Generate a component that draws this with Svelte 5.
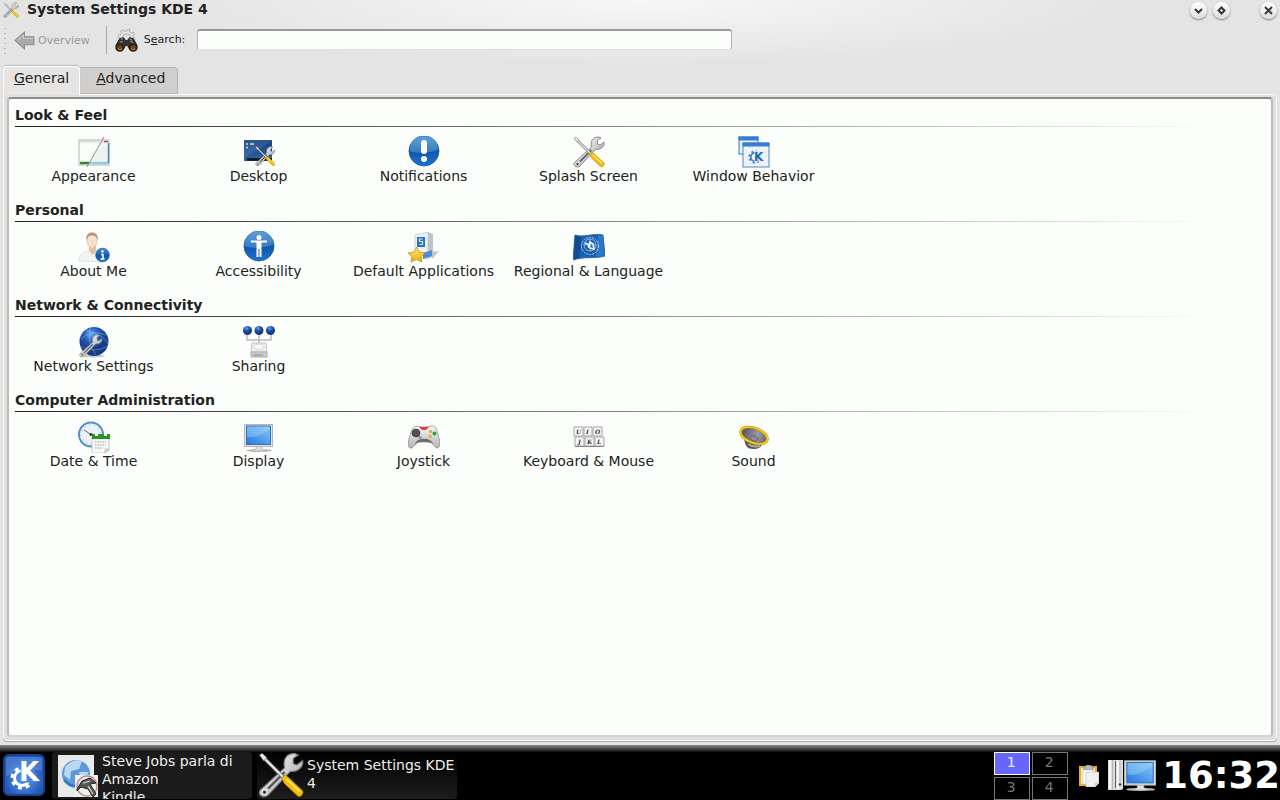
<script>
  let search = $state('');
  let activeTab = $state('General');
  let desktop = $state(1);

  const groups = [
    {
      title: 'Look & Feel',
      items: [
        { icon: 'appearance', label: 'Appearance' },
        { icon: 'desktop', label: 'Desktop' },
        { icon: 'notifications', label: 'Notifications' },
        { icon: 'tools', label: 'Splash Screen' },
        { icon: 'windows', label: 'Window Behavior' }
      ]
    },
    {
      title: 'Personal',
      items: [
        { icon: 'about', label: 'About Me' },
        { icon: 'accessibility', label: 'Accessibility' },
        { icon: 'defaults', label: 'Default Applications' },
        { icon: 'flag', label: 'Regional & Language' }
      ]
    },
    {
      title: 'Network & Connectivity',
      items: [
        { icon: 'network', label: 'Network Settings' },
        { icon: 'sharing', label: 'Sharing' }
      ]
    },
    {
      title: 'Computer Administration',
      items: [
        { icon: 'clock', label: 'Date & Time' },
        { icon: 'display', label: 'Display' },
        { icon: 'joystick', label: 'Joystick' },
        { icon: 'keyboard', label: 'Keyboard & Mouse' },
        { icon: 'sound', label: 'Sound' }
      ]
    }
  ];
</script>

{#snippet wrench()}
  <path d="M2 26 L18.500 11 C17 5 20 1 25.500 1 L28 2 L24.500 4.500 L24.500 8 L27 9 L31 6 C32 11 27 14 22.500 13.500 L7 30 C3 33 -1 29 2 26Z" fill="url(#metal)" stroke="#777" stroke-width=".8" />
  <path d="M7 25.500 L18.500 14" stroke="#555" stroke-width="1.600" />
  <circle cx="4.500" cy="28" r="1.500" fill="#333" stroke="#eee" stroke-width=".7" />
{/snippet}

{#snippet tools()}
  {@render wrench()}
  <path d="M3 3 L18 18" stroke="#777" stroke-width="2.600" />
  <path d="M3 3 L18 18" stroke="#eee" stroke-width="1.300" />
  <path d="M1 2 L3 1 L6 4 L4 6Z" fill="#eee" stroke="#888" stroke-width=".6" />
  <path d="M16.500 18 L19 16 L22 18.500 L31 27 C32 29 29.500 32 27.500 30.500 L18.500 22Z" fill="#f5bd08" stroke="#b98a00" stroke-width=".6" />
  <path d="M20 19 L29 27.500" stroke="#ffe670" stroke-width="1.200" />
{/snippet}

{#snippet gear()}
  <circle r="6" fill="none" stroke-width="2.400" />
  <circle r="8" fill="none" stroke-width="2.600" stroke-dasharray="3.140 3.140" />
{/snippet}

{#snippet icon(name)}
  <svg class="icon" viewBox="0 0 32 32" aria-hidden="true">
    {#if name === 'appearance'}
      <rect x="1" y="4" width="30" height="25" fill="#fafcfa" stroke="#b5b5b5" />
      <path d="M1.500 5.500H22" stroke="#ccc" stroke-width="2" stroke-dasharray="2 1" />
      <path d="M24 4H30.500V7H22Z" fill="#dbe9f4" />
      <path d="M26 5.500h4" stroke="#d33" stroke-width="1.500" />
      <path d="M2 27h9" stroke="#2f8a2f" stroke-width="2.500" />
      <path d="M12 27h18" stroke="#8ccbe8" stroke-width="2.500" />
      <path d="M30.500 7v20" stroke="#3b82c8" stroke-width="1.500" />
      <path d="M24 9 L29 9 L29 25 L14 25Z" fill="#eff0f0" />
      <path d="M26 1 L9 31" stroke="#888" />
    {:else if name === 'desktop'}
      <rect x="1" y="4" width="28" height="21" fill="url(#screen)" />
      <path d="M1 22 L29 5 V4 H1Z" fill="#6796cc" opacity=".25" />
      <path d="M4 23.500h25" stroke="#07131f" stroke-width="2.500" />
      <path d="M3 8h2M3 11.500h2M7 8h4" stroke="#d5e2b1" stroke-width="1.500" />
      <g transform="translate(12 10) scale(.64)">{@render tools()}</g>
    {:else if name === 'notifications'}
      <circle cx="16" cy="15" r="15" fill="url(#blue)" stroke="#165398" stroke-width=".8" />
      <path d="M2 13 A14 14 0 0 1 30 13 C25 17 7 18 2 15Z" fill="#83bee9" opacity=".35" />
      <rect x="13" y="4" width="6" height="14" rx="3" fill="#fff" />
      <circle cx="16" cy="23" r="3" fill="#fff" />
    {:else if name === 'tools'}
      {@render tools()}
    {:else if name === 'windows'}
      <rect x="1" y="1" width="19" height="17" fill="#e8f1fa" stroke="#347bc9" />
      <path d="M.5 2.500h20" stroke="#377dd0" stroke-width="4" />
      <rect x="5" y="7" width="26" height="24" fill="#eef1f5" stroke="#4b8ccf" />
      <path d="M4.500 8.500h27" stroke="#377dd0" stroke-width="4" />
      <g stroke="#3b7fc9" transform="translate(17 21) scale(.7)">{@render gear()}</g>
      <text x="16" y="25" fill="#2268b7" stroke="#eef1f5" stroke-width="1.500" paint-order="stroke" font-size="12" font-weight="bold">K</text>
    {:else if name === 'about'}
      <path d="M1 30 C1 24 4 21 11 20 H18 C24 22 25 26 25 31 Z" fill="#f2f4f7" stroke="#d8dae0" stroke-width=".8" />
      <path d="M11 14h7v6l-3.500 4-3.500-4Z" fill="#e2c1a2" />
      <ellipse cx="14" cy="9.500" rx="5" ry="7.500" fill="#f6e2cc" stroke="#cdb49b" stroke-width=".6" />
      <path d="M8.500 9 C6 0 21 -2 20 9 L18.500 6 C15 4 12 4 10 6Z" fill="#b5977a" />
      <circle cx="24.500" cy="24" r="6.800" fill="url(#blue)" stroke="#164d8c" stroke-width=".7" />
      <circle cx="24.500" cy="20.500" r="1.200" fill="#fff" />
      <path d="M23 23.500h2v4.500M22.500 28h4" stroke="#fff" stroke-width="1.600" fill="none" />
    {:else if name === 'accessibility'}
      <circle cx="16" cy="15" r="15" fill="url(#blue)" stroke="#165398" stroke-width=".8" />
      <path d="M2 13 A14 14 0 0 1 30 13 C25 17 7 18 2 15Z" fill="#83bee9" opacity=".35" />
      <circle cx="16" cy="6.500" r="2.500" fill="#fff" />
      <path d="M8 9.500h16v2h-5.500V26H16.500V18h-1v8h-2V11.500H8Z" fill="#fff" />
    {:else if name === 'defaults'}
      <path d="M22 21 L31 20 L24 28Z" fill="#aaa" opacity=".7" />
      <path d="M7 4 L20 1 V28 L7 26Z" fill="#edf1f6" stroke="#c3c8cc" stroke-width=".7" />
      <path d="M20 1 L25 3 V25 L20 28Z" fill="#bdc3c9" />
      <path d="M15 22 L24 19 V25 L15 28Z" fill="#4b8bd8" />
      <rect x="9" y="6" width="8" height="10" fill="#2874c2" />
      <path d="M14.500 8h-3v2.500h3v3h-3" fill="none" stroke="#dbe9f7" stroke-width="1.200" />
      <path d="M8.500 16 L11 21 L17 22 L13 25.500 L14 31 L8.500 28.500 L3 31 L4 25.500 L0 22 L6 21Z" fill="url(#gold)" stroke="#c49220" stroke-width=".8" />
    {:else if name === 'flag'}
      <path d="M2 4 C10 7 19 2 30 4 L32 25 C22 28 12 25 0 29Z" fill="#195eaf" stroke="#2669b3" />
      <path d="M2 5 L8 6 L6 27 L1 28Z" fill="#12498f" />
      <path d="M25 4 L30 5 L31 24 L23 26Z" fill="#2d76c5" />
      <g fill="none" stroke="#b8d7ef">
        <circle cx="17" cy="15" r="8.500" stroke-dasharray="2 1" />
        <circle cx="17" cy="14" r="6" stroke-width=".7" />
        <path d="M11 14h12M17 8v12" stroke-width=".7" />
      </g>
      <path d="M12 12l3 1 1 4 1-6 3 2 1 5-4-1" fill="none" stroke="#fff" stroke-width="1.500" />
    {:else if name === 'network'}
      <ellipse cx="16" cy="30" rx="11" ry="1.500" fill="#ccc" />
      <circle cx="16" cy="15.500" r="14.500" fill="url(#globe)" />
      <g fill="none" stroke="#a5c8ff" stroke-width=".7" opacity=".6">
        <path d="M3 13 Q13 3 28 9M8 4 Q28 10 30 18M2 20 Q16 28 30 20M12 2 Q9 18 18 29" />
      </g>
      <g transform="translate(1 8) scale(.74)">{@render wrench()}</g>
    {:else if name === 'sharing'}
      <path d="M4 8v6h24V8M16 8v9" fill="none" stroke="#bbb" stroke-width="1.500" />
      <circle cx="4.500" cy="4.500" r="4.500" fill="url(#globe)" />
      <circle cx="16" cy="4.500" r="4.500" fill="url(#globe)" />
      <circle cx="27.500" cy="4.500" r="4.500" fill="url(#globe)" />
      <path d="M9 17h14l1 9H8Z" fill="#eee" stroke="#c4c4c4" />
      <ellipse cx="16" cy="21" rx="5" ry="3" fill="#f8f8f8" stroke="#d5d5d5" />
      <path d="M8 26h16v5H8Z" fill="#ccc" stroke="#aaa" />
      <path d="M10 29h10" stroke="#888" />
    {:else if name === 'clock'}
      <circle cx="13" cy="13.500" r="12" fill="#edf1f4" stroke="#4f91d0" stroke-width="2" />
      <circle cx="13" cy="13.500" r="10" fill="none" stroke="#b5cadb" stroke-width="2" stroke-dasharray="1 4" />
      <path d="M6 9l7 4.500h8" stroke="#666" fill="none" />
      <circle cx="13" cy="13.500" r="1.500" fill="#333" />
      <path d="M14 14h17v15l-4 3H14Z" fill="#fafafa" stroke="#bbb" stroke-width=".8" />
      <path d="M14 13h18v5H14Z" fill="#26951e" />
      <path d="M17 14h3M26 14h3" stroke="#fff" stroke-width="2" />
      <path d="M17 21h11M17 24h11M17 27h8" stroke="#bbb" stroke-width="1.500" stroke-dasharray="1.500 1" />
      <path d="M31 28h-4v4Z" fill="#ddd" stroke="#aaa" stroke-width=".6" />
    {:else if name === 'display'}
      {@render monitor()}
    {:else if name === 'joystick'}
      <path d="M5 7 C8 4 12 6 16 6 C21 6 25 3 28 7 C30 13 33 22 31 26 C28 29 26 24 23 21 H10 C7 23 5 28 2 27 C-2 25 2 12 5 7Z" fill="url(#pad)" stroke="#888" stroke-width=".7" />
      <path d="M7 23c2-7 16-7 18 0-5-3-13-3-18 0Z" fill="#6c6c6c" />
      <path d="M11 6h10l-3 3h-4Z" fill="#e04040" />
      <circle cx="8" cy="12" r="3.800" fill="#555" stroke="#333" />
      <circle cx="12" cy="16.500" r="1.700" fill="#999" />
      <circle cx="22" cy="15.500" r="2" fill="#e5b346" />
      <circle cx="26.500" cy="12.500" r="2" fill="#26aa32" />
      <circle cx="22.500" cy="10.500" r="1.500" fill="#d2a55a" />
    {:else if name === 'keyboard'}
      <g fill="#f6f6f6" stroke="#a5a5a5">
        <path d="M1 6h9v9H1ZM11 6h8v9h-8ZM20 6h9v9h-9ZM2 16h9v9H2ZM12 16h9v9h-9ZM22 16h9v9h-9Z" />
      </g>
      <path d="M2 25.500h29" stroke="#888" />
      <g class="keys">
        <text x="3" y="13">U</text><text x="13" y="13">I</text><text x="22" y="13">O</text>
        <text x="5" y="23">J</text><text x="14" y="23">K</text><text x="24" y="23">L</text>
      </g>
    {:else if name === 'sound'}
      <path d="M6 17 C7 25 9 28 16 28 C23 28 24 24 25 20Z" fill="#555" />
      <path d="M10 23c4 3 8 3 12 2" stroke="#aaa" stroke-width="2" fill="none" />
      <ellipse cx="16" cy="14.500" rx="14" ry="7.500" transform="rotate(20 16 14.500)" fill="url(#cone)" stroke="#b98a00" stroke-width="2.600" />
      <ellipse cx="16" cy="14.500" rx="14" ry="7.500" transform="rotate(20 16 14.500)" fill="none" stroke="#f7d01c" stroke-width="1.600" />
      <ellipse cx="16" cy="17.500" rx="4" ry="2.500" transform="rotate(20 16 17.500)" fill="#8b8d9b" stroke="#555" stroke-width=".7" />
    {/if}
  </svg>
{/snippet}

{#snippet monitor()}
  <ellipse cx="16" cy="29.500" rx="13" ry="1.500" fill="#bbb" />
  <path d="M13 25h6v3l5 2H8l5-2Z" fill="#dedede" stroke="#aaa" stroke-width=".6" />
  <rect x="1.500" y="3.500" width="28" height="22" fill="#e5e5e5" stroke="#b5b5b5" />
  <rect x="3.500" y="5" width="24" height="18.500" fill="url(#sky)" stroke="#2d71b9" />
  <path d="M4 16 Q14 18 27 8V5.500H4Z" fill="#a8daf8" opacity=".4" />
{/snippet}

<!-- shared gradients -->
<svg class="defs" width="0" height="0" aria-hidden="true">
  <defs>
    <linearGradient id="metal" x1="0" y1="0" x2="1" y2="1"><stop stop-color="#fff" /><stop offset=".5" stop-color="#d0d0d0" /><stop offset="1" stop-color="#8a8a8a" /></linearGradient>
    <linearGradient id="blue" x2="0" y2="1"><stop stop-color="#4791d1" /><stop offset=".55" stop-color="#1257ad" /><stop offset="1" stop-color="#1c74d5" /></linearGradient>
    <linearGradient id="screen" x2="0" y2="1"><stop stop-color="#183f78" /><stop offset="1" stop-color="#3263a1" /></linearGradient>
    <linearGradient id="gold" x2="0" y2="1"><stop stop-color="#fff06a" /><stop offset="1" stop-color="#edaa12" /></linearGradient>
    <radialGradient id="globe" cx=".4" cy=".25"><stop stop-color="#6aa9ef" /><stop offset=".5" stop-color="#2460bd" /><stop offset="1" stop-color="#163c86" /></radialGradient>
    <linearGradient id="sky" x1="1" x2="0" y2="1"><stop stop-color="#87c9fa" /><stop offset="1" stop-color="#2776df" /></linearGradient>
    <linearGradient id="pad" x2="0" y2="1"><stop stop-color="#f5f5f5" /><stop offset="1" stop-color="#b5b5b5" /></linearGradient>
    <linearGradient id="cone"><stop stop-color="#4c4c55" /><stop offset=".6" stop-color="#9a9ba8" /><stop offset="1" stop-color="#62626c" /></linearGradient>
    <radialGradient id="kmenu" cx=".5" cy=".6"><stop stop-color="#5e9df0" /><stop offset="1" stop-color="#2456b4" /></radialGradient>
  </defs>
</svg>

<div class="screen">
  <div class="window">
    <header class="titlebar">
      <svg class="title-icon" viewBox="0 0 32 32" aria-hidden="true">{@render tools()}</svg>
      <h1>System Settings KDE 4</h1>
      <div class="title-buttons">
        <button aria-label="Minimize"><svg viewBox="0 0 17 17"><path d="M5 7l3.500 3.500L12 7" /></svg></button>
        <button aria-label="Maximize"><svg viewBox="0 0 17 17"><path d="M8.500 5.500l3 3-3 3-3-3Z" /></svg></button>
        <button class="close" aria-label="Close"><svg viewBox="0 0 17 17"><path d="M5 5l7 7M12 5l-7 7" /></svg></button>
      </div>
    </header>

    <div class="toolbar">
      <span class="handle"></span>
      <button class="overview" disabled>
        <svg viewBox="0 0 20 18" aria-hidden="true"><path d="M1 9L10 1V5.500H19V13H10V17Z" fill="#aaa" stroke="#8e8e8e" /><path d="M3 9L9 4V7H18" fill="none" stroke="#ccc" /></svg>
        Overview
      </button>
      <span class="separator"></span>
      <svg class="binoculars" viewBox="0 0 24 24" aria-hidden="true">
        <g fill="none">
          <g stroke="#999">
            <circle cx="12" cy="9" r="5.500" stroke-width="4" />
            <circle cx="12" cy="9" r="8" stroke-width="2.500" stroke-dasharray="3.300 2.980" />
          </g>
          <g stroke="#e9e9e9">
            <circle cx="12" cy="9" r="5.500" stroke-width="2.500" />
            <circle cx="12" cy="9" r="7.500" stroke-width="2" stroke-dasharray="2.300 3.590" stroke-dashoffset="-.4" />
          </g>
        </g>
        <path d="M5 10l4-1 2 3h2l2-3 4 1 4 7v4h-8l-2-4h-2l-2 4H1v-4Z" fill="#333" stroke="#222" />
        <path d="M6 11l2-1M15 10l3 2M5 14l3-1M16 13l3 1" stroke="#aaa" />
        <circle cx="5" cy="19.500" r="3.500" fill="#773d13" stroke="#252525" stroke-width="1.500" />
        <circle cx="19" cy="19.500" r="3.500" fill="#773d13" stroke="#252525" stroke-width="1.500" />
        <path d="M3 20q1 2 4 1M17 20q1 2 4 1" fill="none" stroke="#d98a43" />
      </svg>
      <label for="search">S<u>e</u>arch:</label>
      <input id="search" type="text" bind:value={search} />
    </div>

    <div class="tabs" role="tablist">
      <button role="tab" class:active={activeTab === 'General'} aria-selected={activeTab === 'General'} onclick={() => (activeTab = 'General')}><u>G</u>eneral</button>
      <button role="tab" class:active={activeTab === 'Advanced'} aria-selected={activeTab === 'Advanced'} onclick={() => (activeTab = 'Advanced')}><u>A</u>dvanced</button>
    </div>

    <main class="frame">
      <div class="panel">
        {#each groups as group}
          <section>
            <h2>{group.title}</h2>
            <div class="items">
              {#each group.items as item}
                <button class="item">
                  {@render icon(item.icon)}
                  <span>{item.label}</span>
                </button>
              {/each}
            </div>
          </section>
        {/each}
      </div>
    </main>
  </div>

  <footer class="taskbar">
    <button class="kmenu" aria-label="Application launcher">
      <svg viewBox="0 0 42 42">
        <rect x="1" y="1" width="40" height="40" rx="5" fill="url(#kmenu)" stroke="#16418f" stroke-width="2" />
        <path d="M3 5q0-2 3-2h30q3 0 3 2v12Q20 12 3 22Z" fill="#86b4f3" opacity=".35" />
        <g stroke="#fff" transform="translate(19 24) scale(1.250)">{@render gear()}</g>
        <path d="M17 5h17l-3 11 5 12-6 1-12-1Z" fill="#4784dc" />
        <text x="16" y="27" fill="#fff" font-size="26" font-weight="bold">K</text>
      </svg>
    </button>
    <button class="task first">
      <svg class="thumb" viewBox="0 0 42 44" aria-hidden="true">
        <path d="M1 1h36v42H1Z" fill="#e8e9eb" />
        <circle cx="19" cy="20" r="14" fill="#5c9ad9" />
        <path d="M8 13q8-9 17-6l-3 8-8 2-1 9-6-5ZM22 18l9 0-2 10-5-2Z" fill="#b9daf4" />
        <path d="M7 26q9 10 23 3" stroke="#3271b3" stroke-width="2" fill="none" />
        <path d="M18 21h23v22H18Z" fill="#f0efed" />
        <circle cx="30" cy="32" r="10" fill="none" stroke="#bd9292" stroke-width="1.500" />
        <path d="M20 35l5-8 8-3 6 5-6 1 6 10-3 3-5-8-7-2-4 4Z" fill="#555" stroke="#222" />
        <path d="M26 29l7-2M31 32l5 8" stroke="#bbb" stroke-width="1.500" />
      </svg>
      <span class="task-text">Steve Jobs parla di<br />Amazon<br />Kindle</span>
    </button>
    <button class="task second">
      <svg class="thumb" viewBox="0 0 32 32" aria-hidden="true">{@render tools()}</svg>
      <span class="task-text">System Settings KDE 4</span>
    </button>

    <div class="tray">
      <div class="pager">
        {#each [1, 2, 3, 4] as n}
          <button class:current={desktop === n} onclick={() => (desktop = n)}>{n}</button>
        {/each}
      </div>
      <svg class="clipboard" viewBox="0 0 20 22" aria-hidden="true">
        <rect x="1" y="2" width="16" height="18" fill="#f5e8b2" stroke="#e8b418" stroke-width="2" />
        <path d="M5 1h2l1-1h3l1 1h2v4H5Z" fill="#bbb" stroke="#777" stroke-width=".7" />
        <path d="M4 5h11v14H4Z" fill="#fff" stroke="#ccc" stroke-width=".7" />
        <path d="M7 7h13v11l-4 4H7Z" fill="#f0f0ec" stroke="#bbb" stroke-width=".6" />
        <path d="M20 18h-4v4Z" fill="#ccc" />
      </svg>
      <svg class="computer" viewBox="0 0 48 34" aria-hidden="true">
        <path d="M0 1h15v29l-2 1H0Z" fill="#dcdcdc" />
        <path d="M4.500 1v29M12 1v22" stroke="#b5b5b5" />
        <path d="M7.500 2v27" stroke="#666" />
        <path d="M2 1v29M10 1v29" stroke="#f5f5f5" stroke-width="2" />
        <circle cx="12" cy="25.500" r="1.200" fill="#333" />
        <g transform="translate(15 -2) scale(1.100)">{@render monitor()}</g>
      </svg>
      <time class="time">16:32</time>
    </div>
  </footer>
</div>

<style>
  :global(body) {
    margin: 0;
    background: #000;
  }
  .defs {
    position: absolute;
  }
  .screen {
    min-height: 100vh;
    display: flex;
    flex-direction: column;
    font-family: 'DejaVu Sans', sans-serif;
    font-size: 14px;
    color: #222;
  }
  button {
    font: inherit;
    color: inherit;
    border: none;
    background: none;
    padding: 0;
    margin: 0;
  }
  svg {
    display: block;
    flex: none;
  }
  svg text {
    font-family: 'DejaVu Sans', sans-serif;
  }
  .window {
    flex: 1;
    display: flex;
    flex-direction: column;
    box-sizing: border-box;
    padding: 0 3px 4px;
    background: radial-gradient(ellipse 500px 66px at 50% 0, #f7f7f7, #e4e4e4) #e4e4e4;
  }

  .titlebar {
    display: flex;
    align-items: center;
    height: 20px;
  }
  .title-icon {
    width: 16px;
    height: 16px;
  }
  h1 {
    flex: 1;
    margin: 0 0 2px 8px;
    font-size: 14px;
    line-height: 18px;
  }
  .title-buttons {
    display: flex;
    gap: 6px;
  }
  .title-buttons button {
    width: 17px;
    height: 17px;
    border-radius: 50%;
    background: linear-gradient(#fff, #dcdcdc);
    box-shadow: 0 1px 2px #777;
  }
  .title-buttons .close {
    margin-left: 24px;
  }
  .title-buttons path {
    fill: none;
    stroke: #3c3636;
    stroke-width: 2;
  }

  .toolbar {
    display: flex;
    align-items: center;
    height: 40px;
    font-size: 11px;
  }
  .handle {
    width: 4px;
    height: 28px;
    background: radial-gradient(circle, #b5b5b5 1px, transparent 1px) 0 0 / 4px 5px;
  }
  .overview {
    display: flex;
    align-items: center;
    gap: 3px;
    margin-left: 7px;
    color: #999;
  }
  .overview svg {
    width: 21px;
    height: 19px;
  }
  .separator {
    width: 1px;
    height: 28px;
    margin: 0 8px 0 16px;
    background: #aaa;
  }
  .binoculars {
    width: 23px;
    height: 23px;
  }
  label {
    margin: 0 12px 2px 6px;
  }
  #search {
    flex: 0 1 535px;
    min-width: 80px;
    height: 21px;
    box-sizing: border-box;
    margin-bottom: 2px;
    padding: 0 6px;
    border: 1px solid #b5b5b5;
    border-top: 2px solid #999;
    border-bottom-color: #e0e0e0;
    border-radius: 3px;
    background: #fbfefa;
    font: inherit;
  }

  .tabs {
    display: flex;
    align-items: flex-end;
    height: 34px;
  }
  .tabs button {
    box-sizing: border-box;
    height: 27px;
    padding: 0 12px 6px 16px;
    border: 1px solid #b5b5b5;
    border-left: none;
    border-radius: 0 4px 0 0;
    background: #d1cfcd;
  }
  .tabs button.active {
    height: 29px;
    margin-bottom: -1px;
    padding: 0 10px 6px;
    border: 1px solid #fff;
    border-bottom: none;
    border-radius: 4px 4px 0 0;
    background: #e6e5e4;
    box-shadow: 0 -1px 1px #bbb;
    z-index: 1;
  }

  .frame {
    flex: 1;
    display: flex;
    padding: 2px 3px 3px;
    border: 1px solid #fff;
    border-radius: 0 4px 4px 4px;
    background: #dfdedc;
    box-shadow: 0 1px 1px #aaa;
  }
  .panel {
    flex: 1;
    min-width: 0;
    padding: 5px 4px 5px 2px;
    border: 2px solid #bcbcbc;
    border-top-color: #8c8c8c;
    border-bottom-color: #d4d4d4;
    border-radius: 4px;
    background: #fbfefa;
  }
  section {
    margin-bottom: 15px;
  }
  h2 {
    margin: 0 54px 9px 4px;
    padding-bottom: 1px;
    font-size: 14px;
    line-height: 22px;
    background: linear-gradient(90deg, #222, #888 50%, transparent) bottom / 100% 1px no-repeat;
  }
  .items {
    display: flex;
    flex-wrap: wrap;
  }
  .item {
    width: 165px;
    display: flex;
    flex-direction: column;
    align-items: center;
    line-height: 16px;
    white-space: nowrap;
  }
  .icon {
    width: 32px;
    height: 32px;
  }
  .keys text {
    font-family: 'DejaVu Serif', serif;
    font-size: 6px;
    font-style: italic;
    font-weight: bold;
    fill: #333;
  }

  .taskbar {
    display: flex;
    align-items: flex-start;
    height: 48px;
    padding-top: 7px;
    background: linear-gradient(#8b8b8b, #222 6px, #000 7px);
    color: #eee;
    overflow: hidden;
  }
  .kmenu {
    margin: 2px 7px 0 3px;
  }
  .kmenu svg {
    width: 42px;
    height: 42px;
  }
  .task {
    display: flex;
    align-items: flex-start;
    width: 200px;
    height: 47px;
    border-radius: 4px;
    background: #1b1b1b;
    text-align: left;
    line-height: 18px;
    overflow: hidden;
  }
  .task.first {
    margin-right: 5px;
  }
  .task.first .thumb {
    margin: 2px 3px 0 5px;
  }
  .task.second {
    background: linear-gradient(#000, #1d1d1d);
  }
  .thumb {
    width: 42px;
    height: 44px;
  }
  .second .thumb {
    width: 46px;
    height: 46px;
    margin-left: 1px;
    margin-right: 3px;
  }
  .second .task-text {
    padding-top: 4px;
  }
  .tray {
    display: flex;
    align-items: center;
    height: 48px;
    margin-left: auto;
  }
  .pager {
    display: grid;
    grid-template-columns: 36px 36px;
    gap: 2px;
    margin-right: 11px;
  }
  .pager button {
    box-sizing: border-box;
    height: 23px;
    padding: 0 2px 2px 0;
    border: 1px solid #777;
    color: #777;
    line-height: 19px;
  }
  .pager .current {
    border-color: #fff;
    background: #6666ff;
    color: #eee;
  }
  .clipboard {
    width: 20px;
    height: 22px;
    margin-right: 9px;
  }
  .computer {
    width: 48px;
    height: 34px;
    margin-right: 6px;
  }
  .time {
    color: #fff;
    font-size: 37px;
    font-weight: bold;
    line-height: 48px;
  }
</style>
